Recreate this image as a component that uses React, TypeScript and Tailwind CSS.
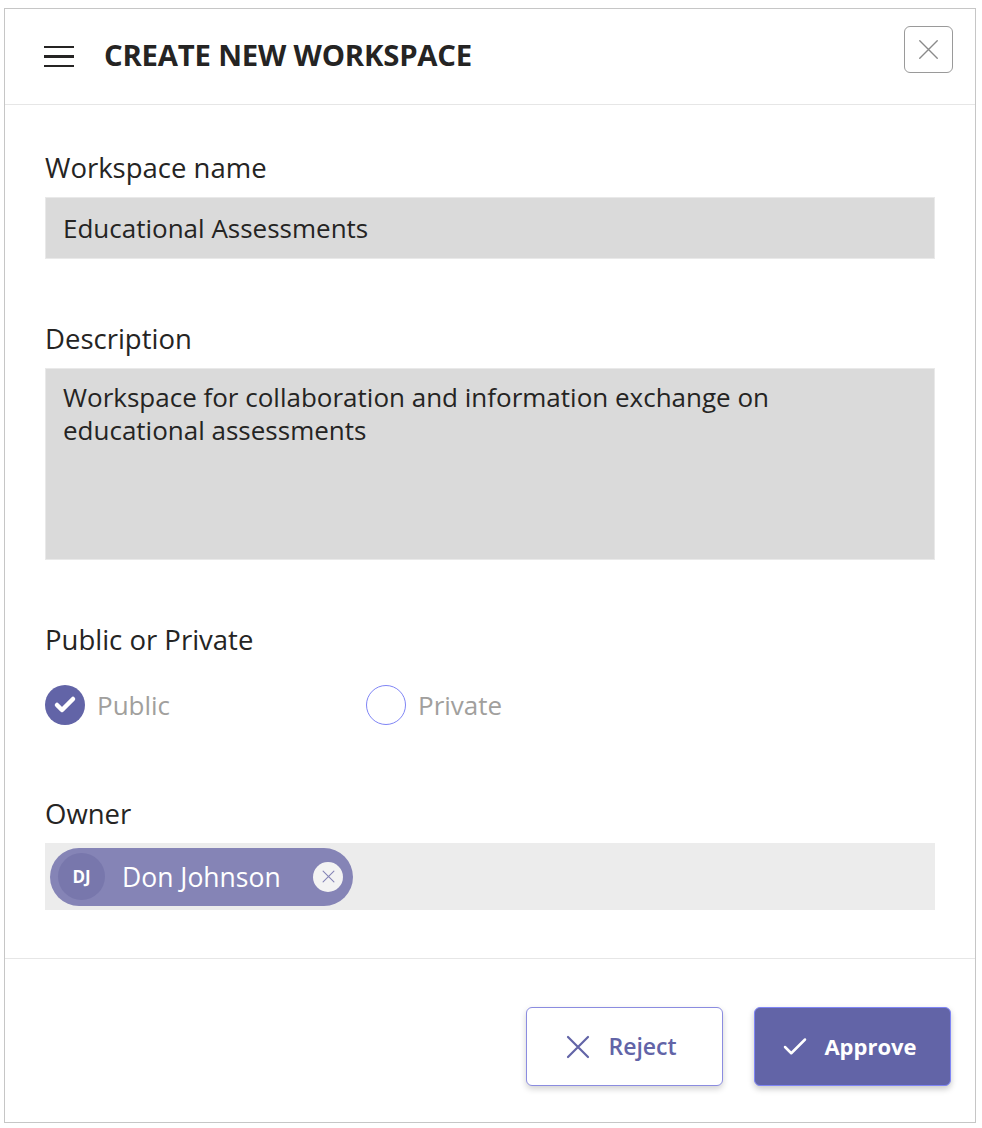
import { Check } from 'lucide-react';

const font = { fontFamily: '"Open Sans", "Noto Sans", sans-serif' };

function Label({ children }: { children: React.ReactNode }) {
  return <div className="text-[27.5px] leading-[34px] text-[#252423]">{children}</div>;
}

// thin cross used on the close and reject buttons
function Cross({ size, stroke }: { size: number; stroke: number }) {
  return (
    <svg width={size} height={size} viewBox="0 0 24 24" fill="none" stroke="currentColor" strokeWidth={stroke} strokeLinecap="round">
      <path d="M2 2 22 22M22 2 2 22" />
    </svg>
  );
}

export default function App() {
  return (
    <div className="w-[982px] h-[1128px] bg-white pt-[8px] pl-[4px]" style={font}>
      <div className="w-[972px] h-[1115px] border border-[#c6c6c6] flex flex-col">
        {/* Header */}
        <div className="h-[96px] shrink-0 border-b border-[#e6e6e6] flex items-center pl-[39px] pr-[22px]">
          <div className="w-[30px] flex flex-col gap-[7px]">
            <span className="block h-[2.5px] bg-[#252423]" />
            <span className="block h-[2.5px] bg-[#252423]" />
            <span className="block h-[2.5px] bg-[#252423]" />
          </div>
          <h1 className="ml-[30px] mb-[2px] text-[29.3px] font-bold text-[#252423] tracking-[-0.2px]">CREATE NEW WORKSPACE</h1>
          <button className="ml-auto self-start mt-[17px] w-[49px] h-[47px] rounded-[6px] border border-[#9a9a9a] flex items-center justify-center text-[#8a8a8a]">
            <Cross size={21} stroke={1.6} />
          </button>
        </div>

        {/* Form */}
        <div className="px-[40px] pt-[46px] flex flex-col">
          <Label>Workspace name</Label>
          <div className="mt-[12px] h-[62px] bg-[#dadada] border border-[#e9e9e9] flex items-center px-[17px] text-[26px] text-[#252423]">
            Educational Assessments
          </div>

          <div className="mt-[63px]">
            <Label>Description</Label>
          </div>
          <div className="mt-[12px] h-[192px] bg-[#dadada] border border-[#e9e9e9] px-[17px] pt-[12px] text-[26px] leading-[33px] text-[#252423]">
            Workspace for collaboration and information exchange on educational assessments
          </div>

          <div className="mt-[63px]">
            <Label>Public or Private</Label>
          </div>
          <div className="mt-[28px] flex items-center h-[40px]">
            <div className="w-[321px] flex items-center">
              <span className="w-[40px] h-[40px] rounded-full bg-[#6264a7] flex items-center justify-center">
                <Check className="w-[24px] h-[24px] text-white" strokeWidth={4.5} />
              </span>
              <span className="ml-[12px] text-[26px] text-[#a19f9d]">Public</span>
            </div>
            <div className="flex items-center">
              <span className="w-[40px] h-[40px] rounded-full border-[1.5px] border-[#7f85f5]" />
              <span className="ml-[12px] text-[26px] text-[#a19f9d]">Private</span>
            </div>
          </div>

          <div className="mt-[72px]">
            <Label>Owner</Label>
          </div>
          <div className="mt-[12px] h-[67px] bg-[#ececec] flex items-center pl-[5px]">
            <div className="h-[58px] w-[303px] rounded-full bg-[#8584b6] flex items-center pl-[8px]">
              <span className="w-[47px] h-[47px] rounded-full bg-[#7877ac] flex items-center justify-center text-white text-[17px] font-bold">
                DJ
              </span>
              <span className="ml-[17px] mt-[3px] text-[26.5px] text-white">Don Johnson</span>
              <span className="ml-auto mr-[10px] w-[30px] h-[30px] rounded-full bg-[#f3f3f3] flex items-center justify-center text-[#8584b6]">
                <Cross size={13} stroke={2} />
              </span>
            </div>
          </div>
        </div>

        {/* Footer */}
        <div className="mt-[48px] border-t border-[#e6e6e6] flex justify-end gap-[31px] pr-[24px] pt-[48px]">
          <button className="w-[197px] h-[79px] rounded-[6px] border border-[#8b8ce0] bg-white shadow-[0_3px_6px_rgba(0,0,0,0.18)] flex items-center justify-center gap-[18px] pr-[6px] text-[#6264a7]">
            <Cross size={24} stroke={2.2} />
            <span className="text-[23px] font-semibold">Reject</span>
          </button>
          <button className="w-[197px] h-[79px] rounded-[6px] border border-[#7f85f5] bg-[#6264a7] shadow-[0_3px_6px_rgba(0,0,0,0.22)] flex items-center justify-center gap-[14px] pr-[8px] text-white">
            <Check className="w-[30px] h-[30px]" strokeWidth={2} />
            <span className="text-[22px] font-bold">Approve</span>
          </button>
        </div>
      </div>
    </div>
  );
}
